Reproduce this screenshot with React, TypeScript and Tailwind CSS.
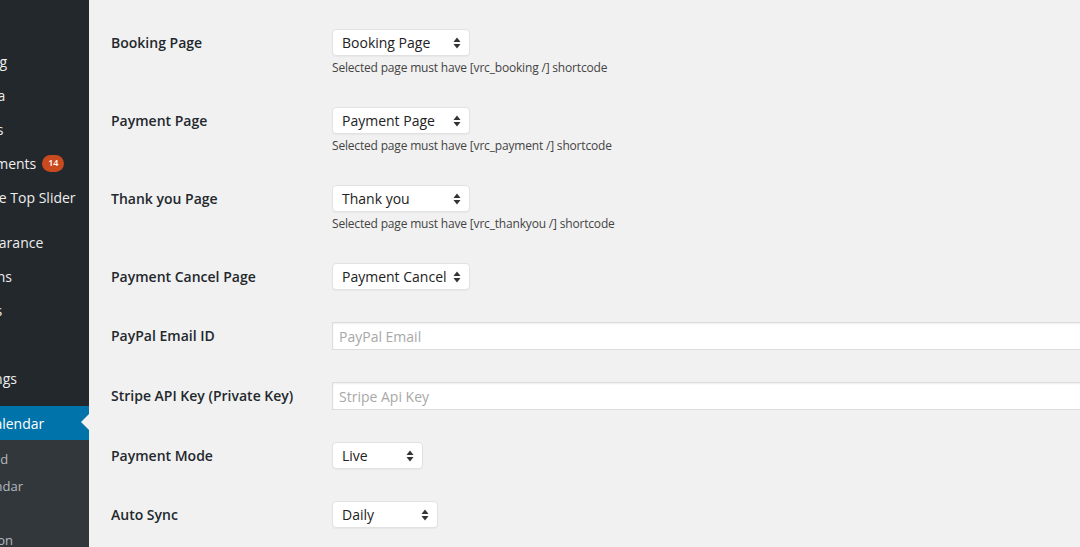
import React from 'react';

const menu = [
  { name: 'Listing' },
  { name: 'Media' },
  { name: 'Pages' },
  { name: 'Comments', badge: '14' },
  { name: 'Native Top Slider' },
  { name: 'Appearance', sep: true },
  { name: 'Plugins' },
  { name: 'Users' },
  { name: 'Tools' },
  { name: 'Settings' },
];

const submenu = ['Dashboard', 'Add Calendar', 'Settings', 'Information'];

const Arrows: React.FC = () => (
  <svg width="8" height="12" viewBox="0 0 8 12" className="shrink-0">
    <path d="M4 0.5 L7.5 5 L0.5 5 Z" fill="#333" />
    <path d="M4 11.5 L7.5 7 L0.5 7 Z" fill="#333" />
  </svg>
);

const Select: React.FC<{ value: string; width: string }> = ({ value, width }) => (
  <div
    className={`${width} h-[27px] flex items-center justify-between pl-[9px] pr-[8px] bg-white border border-[#e2e2e2] rounded-[4px] shadow-[0_1px_1px_rgba(0,0,0,0.04)] text-[14px] text-[#222]`}
  >
    <span className="whitespace-nowrap">{value}</span>
    <Arrows />
  </div>
);

const TextInput: React.FC<{ placeholder: string }> = ({ placeholder }) => (
  <div className="w-[800px] h-[28px] flex items-center px-[6px] bg-white border border-[#dcdcdc] shadow-[inset_0_1px_2px_rgba(0,0,0,0.07)] text-[14px] text-[#a8a8a8]">
    {placeholder}
  </div>
);

const Row: React.FC<{ label: string; desc?: string; children: React.ReactNode }> = ({ label, desc, children }) => (
  <div className="flex py-4">
    <div className="w-[221px] flex items-center pb-[1px] font-semibold text-[14px] text-[#23282d] self-start h-[27px]">
      {label}
    </div>
    <div className="flex flex-col items-start">
      {children}
      {desc && (
        <p className="mt-[4px] leading-[15px] text-[12px] tracking-[-0.18px] text-[#444] whitespace-nowrap">{desc}</p>
      )}
    </div>
  </div>
);

export default function App() {
  return (
    <div className="w-[1080px] h-[547px] flex overflow-hidden bg-[#f1f1f1] font-['Open_Sans',sans-serif]">
      <aside className="relative w-[89px] shrink-0 bg-[#23282d] overflow-hidden">
        <div className="ml-[-71px] w-[160px]">
          <ul className="pt-[44px]">
            {menu.map((m) => (
              <li
                key={m.name}
                className={`h-[34px] flex items-center pl-[36px] text-[14px] text-[#eee] whitespace-nowrap ${m.sep ? 'mt-[11px]' : ''}`}
              >
                {m.name}
                {m.badge && (
                  <span className="ml-[6px] h-[17px] min-w-[22px] px-[5px] rounded-full bg-[#ca4a1f] text-white text-[9px] font-semibold flex items-center justify-center">
                    {m.badge}
                  </span>
                )}
              </li>
            ))}
          </ul>
          <div className="mt-[11px] h-[34px] flex items-center pl-[36px] bg-[#0073aa] text-[14px] text-white whitespace-nowrap">
            VR Calendar
          </div>
          <ul className="bg-[#32373c] pt-[6px] pb-[20px]">
            {submenu.map((s) => (
              <li key={s} className="h-[27px] flex items-center pl-[12px] text-[13px] text-[#b4b9be] whitespace-nowrap">
                {s}
              </li>
            ))}
          </ul>
        </div>
        <div className="absolute left-[81px] top-[414px] w-0 h-0 border-y-[8px] border-y-transparent border-r-[8px] border-r-[#f1f1f1]" />
      </aside>
      <main className="flex-1 pl-[22px] pt-[13px]">
        <Row label="Booking Page" desc="Selected page must have [vrc_booking /] shortcode">
          <Select value="Booking Page" width="w-[138px]" />
        </Row>
        <Row label="Payment Page" desc="Selected page must have [vrc_payment /] shortcode">
          <Select value="Payment Page" width="w-[138px]" />
        </Row>
        <Row label="Thank you Page" desc="Selected page must have [vrc_thankyou /] shortcode">
          <Select value="Thank you" width="w-[138px]" />
        </Row>
        <Row label="Payment Cancel Page">
          <Select value="Payment Cancel" width="w-[138px]" />
        </Row>
        <Row label="PayPal Email ID">
          <TextInput placeholder="PayPal Email" />
        </Row>
        <Row label="Stripe API Key (Private Key)">
          <TextInput placeholder="Stripe Api Key" />
        </Row>
        <Row label="Payment Mode">
          <Select value="Live" width="w-[91px]" />
        </Row>
        <Row label="Auto Sync">
          <Select value="Daily" width="w-[106px]" />
        </Row>
      </main>
    </div>
  );
}
